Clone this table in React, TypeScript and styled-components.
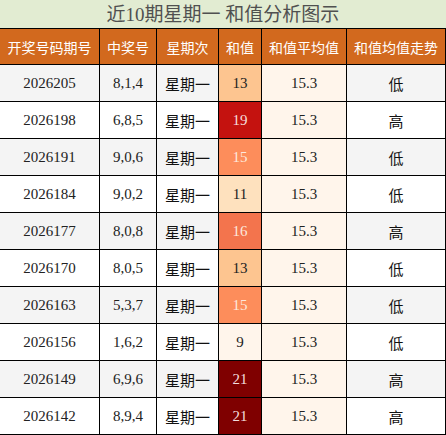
import React from "react";
import styled, { createGlobalStyle } from "styled-components";

const Global = createGlobalStyle`
  html, body { margin: 0; padding: 0; background: #ffffff; }
  body { font-family: "Liberation Serif", "Noto Sans CJK SC", serif; }
`;

const Wrap = styled.div`
  width: 446px;
  display: flex;
  flex-direction: column;
`;

const Title = styled.div`
  height: 28px;
  border-bottom: 1px solid #000;
  background: #e2ecd2;
  color: #505050;
  font-size: 19px;
  display: flex;
  align-items: center;
  justify-content: center;
  line-height: 1;
`;

const Grid = styled.div`
  display: grid;
  grid-template-columns: 100px 57px 62px 43px 85px 99px;
  grid-auto-rows: 37px;
  grid-template-rows: 36px;
`;

const HeadCell = styled.div`
  box-sizing: border-box;
  border-right: 1px solid #000;
  border-bottom: 1px solid #000;
  background: #d2691e;
  color: #ffffff;
  font-size: 14px;
  display: flex;
  align-items: center;
  justify-content: center;
  white-space: nowrap;
`;

const Cell = styled.div<{ $bg?: string; $fg?: string; $size?: number }>`
  box-sizing: border-box;
  border-right: 1px solid #000;
  border-bottom: 1px solid #000;
  background: ${(p) => p.$bg || "#fff"};
  color: ${(p) => p.$fg || "#222"};
  font-size: ${(p) => p.$size || 15}px;
  display: flex;
  align-items: center;
  justify-content: center;
  white-space: nowrap;
`;

const heat: Record<number, [string, string]> = {
  9: ["#fff5eb", "#222"],
  11: ["#fee1be", "#222"],
  13: ["#fdc590", "#222"],
  15: ["#fd8d5b", "#fde8dc"],
  16: ["#f3744d", "#fde8dc"],
  19: ["#c4120f", "#f6dcdc"],
  21: ["#7f0000", "#f3dede"],
};

const rows = [
  ["2026205", "8,1,4", 13, "低"],
  ["2026198", "6,8,5", 19, "高"],
  ["2026191", "9,0,6", 15, "低"],
  ["2026184", "9,0,2", 11, "低"],
  ["2026177", "8,0,8", 16, "高"],
  ["2026170", "8,0,5", 13, "低"],
  ["2026163", "5,3,7", 15, "低"],
  ["2026156", "1,6,2", 9, "低"],
  ["2026149", "6,9,6", 21, "高"],
  ["2026142", "8,9,4", 21, "高"],
] as const;

const headers = ["开奖号码期号", "中奖号", "星期次", "和值", "和值平均值", "和值均值走势"];

export default function App() {
  return (
    <Wrap>
      <Global />
      <Title>近10期星期一 和值分析图示</Title>
      <Grid>
        {headers.map((h) => (
          <HeadCell key={h}>{h}</HeadCell>
        ))}
        {rows.map((r, i) => {
          const bg = i % 2 === 0 ? "#f4f4f4" : "#ffffff";
          const [hb, hf] = heat[r[2]];
          return (
            <React.Fragment key={r[0]}>
              <Cell $bg={bg}>{r[0]}</Cell>
              <Cell $bg={bg}>{r[1]}</Cell>
              <Cell $bg={bg} $fg="#111">星期一</Cell>
              <Cell $bg={hb} $fg={hf}>{r[2]}</Cell>
              <Cell $bg="#fff5eb">15.3</Cell>
              <Cell $bg={bg} $fg="#111">{r[3]}</Cell>
            </React.Fragment>
          );
        })}
      </Grid>
    </Wrap>
  );
}
